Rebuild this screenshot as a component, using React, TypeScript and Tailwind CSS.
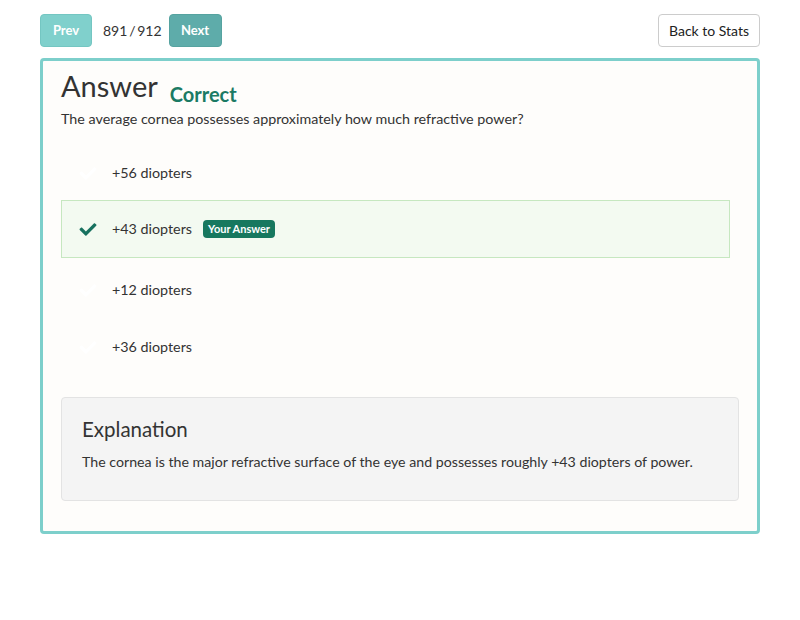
import React from "react";
import { FaCheck } from "react-icons/fa";

const options = [
  { text: "+56 diopters", correct: false, h: "h-[54px]" },
  { text: "+43 diopters", correct: true, h: "h-[58px]" },
  { text: "+12 diopters", correct: false, h: "h-[64px]" },
  { text: "+36 diopters", correct: false, h: "h-[50px]" },
];

const App = () => {
  return (
    <div
      className="w-[800px] h-[620px] bg-white text-[#333333]"
      style={{ fontFamily: "Lato, 'Open Sans', sans-serif" }}
    >
      <div className="px-10 pt-[14px]">
        <div className="flex items-center justify-between">
          <div className="flex items-center">
            <button className="h-[33px] w-[52px] rounded bg-[#80d0cc] border border-[#74c6c2] text-white text-[13px] font-bold">
              Prev
            </button>
            <span className="ml-[11px] mr-[7px] text-[14px] text-[#333]">891{"\u2009/\u2009"}912</span>
            <button className="h-[33px] w-[53px] rounded bg-[#5eacaa] border border-[#56a3a0] text-white text-[13px] font-bold">
              Next
            </button>
          </div>
          <button className="h-[33px] w-[102px] rounded border border-[#cccccc] bg-white text-[14px] text-[#222]">
            Back to Stats
          </button>
        </div>

        <div className="mt-[11px] border-[3px] border-[#7dcfcb] rounded bg-[#fefdfb] px-[18px] pt-[6px] pb-[30px]">
          <div className="flex items-end">
            <h1 className="text-[29px] leading-[38px] text-[#333]">Answer</h1>
            <span className="ml-[12px] mb-[-4px] text-[20px] font-bold text-[#1b7a64]">Correct</span>
          </div>
          <p className="text-[14.3px] leading-5 mt-[4px] text-[#333]">
            The average cornea possesses approximately how much refractive power?
          </p>

          <div className="mt-[17px] mr-[9px] flex flex-col">
            {options.map((o) => (
              <div
                key={o.text}
                className={
                  o.correct
                    ? `${o.h} flex items-center pl-[15px] border border-[#c6e7c0] bg-[#f3faf1]`
                    : `${o.h} flex items-center pl-4`
                }
              >
                <FaCheck
                  className={o.correct ? "text-[#17715f] w-[22px] h-[17px]" : "text-white w-[22px] h-[17px]"}
                />
                <span className="ml-[13px] text-[14.3px] text-[#333]">{o.text}</span>
                {o.correct && (
                  <span className="ml-[11px] h-[18px] flex items-center rounded-sm bg-[#17785f] px-[5px] text-[11px] font-bold text-white">
                    Your Answer
                  </span>
                )}
              </div>
            ))}
          </div>

          <div className="mt-[25px] rounded border border-[#e3e3e3] bg-[#f4f4f4] px-5 pt-[16px] pb-[28px]">
            <h2 className="text-[20.5px] leading-[30px] text-[#333]">Explanation</h2>
            <p className="mt-[8px] text-[14.2px] leading-5 text-[#333]">
              The cornea is the major refractive surface of the eye and possesses roughly +43 diopters of power.
            </p>
          </div>
        </div>
      </div>
    </div>
  );
};

export default App;
